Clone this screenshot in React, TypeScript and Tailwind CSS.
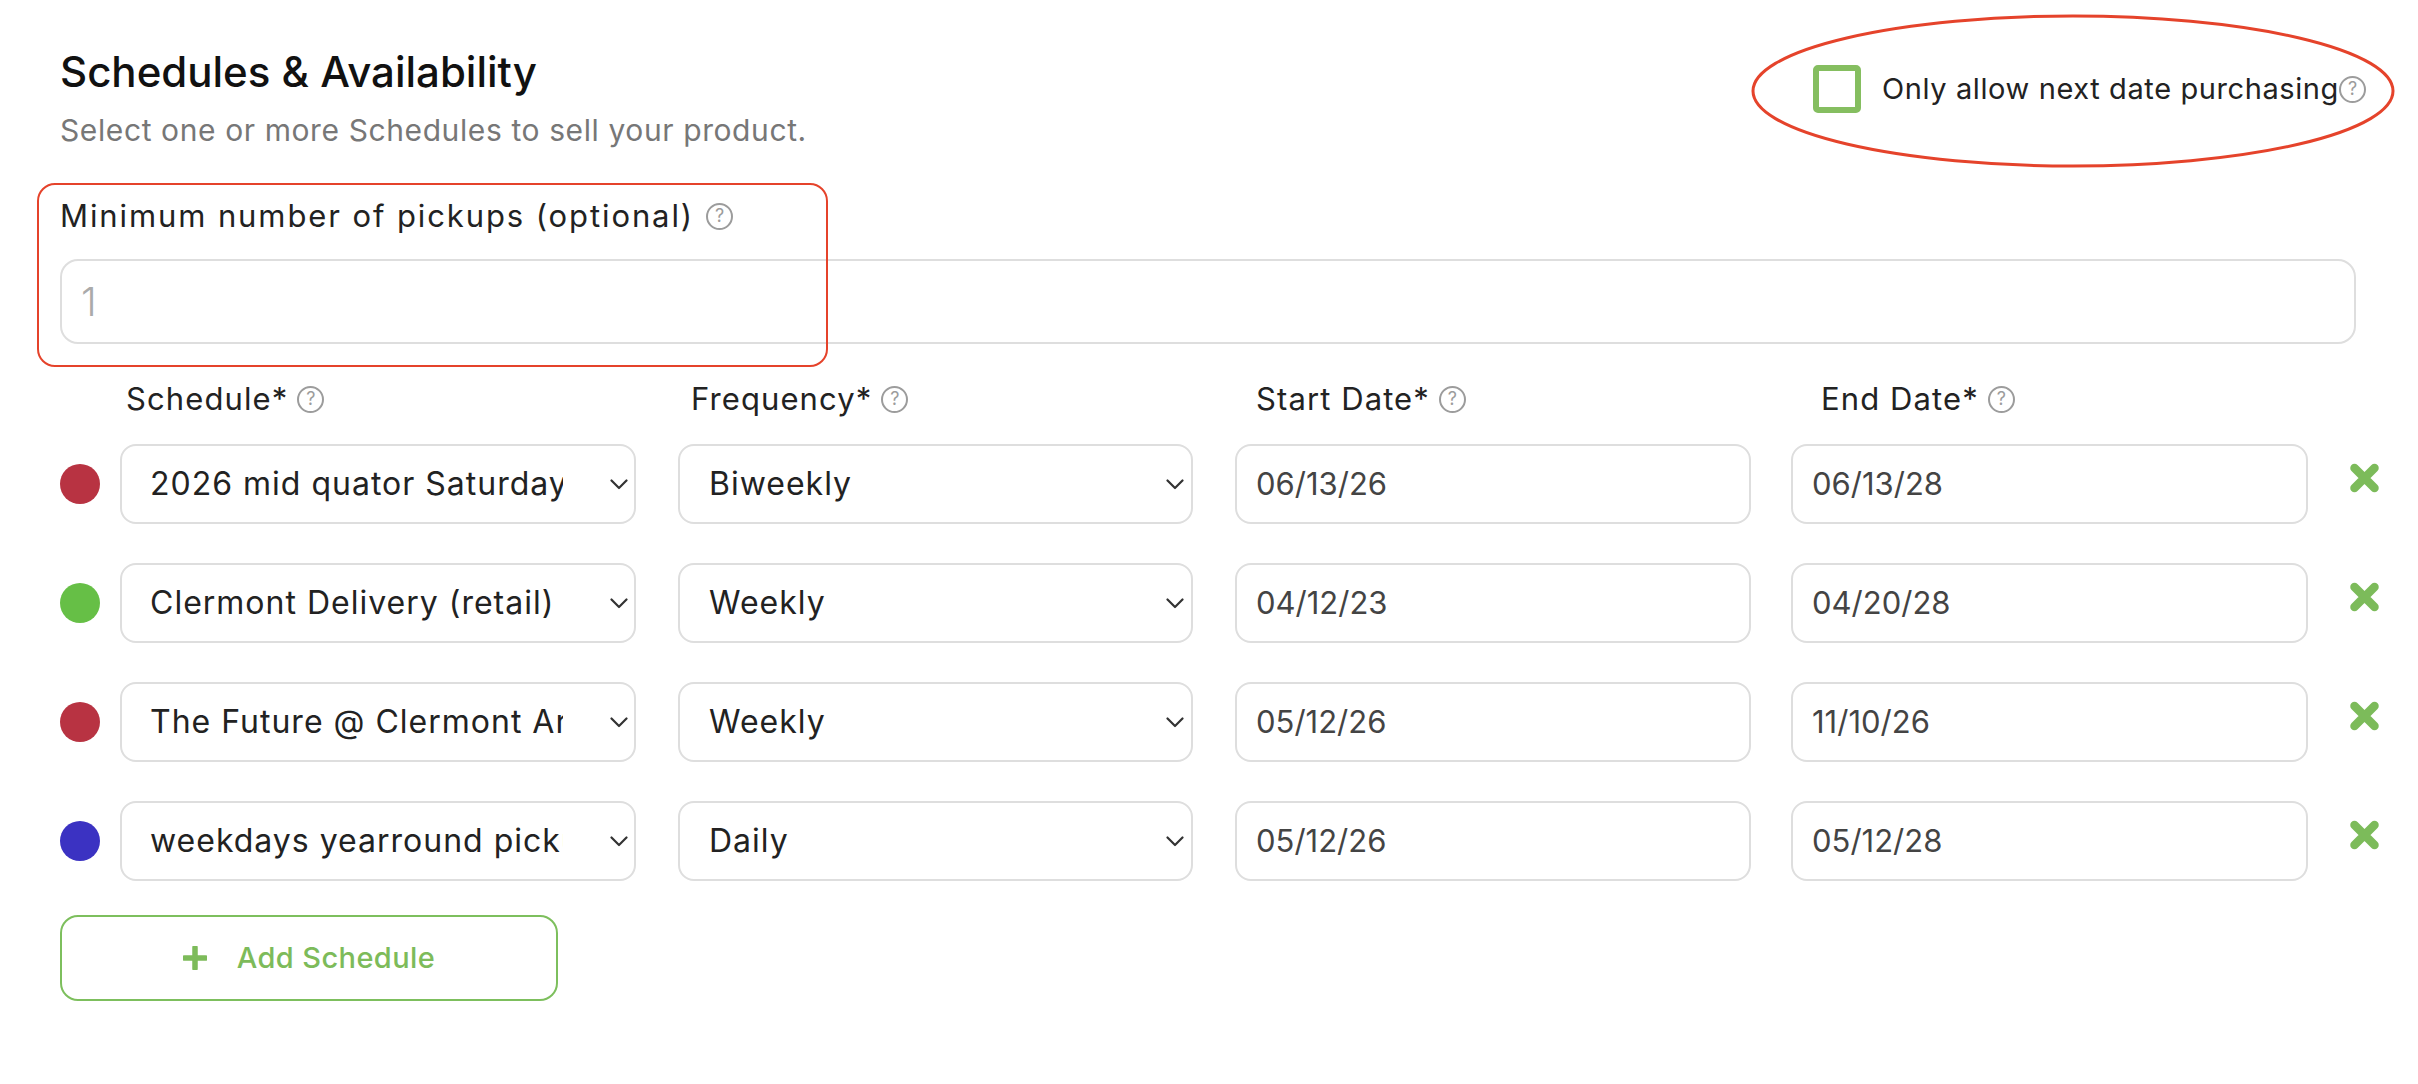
import React from "react";

const Help = ({ className = "" }: { className?: string }) => (
  <span
    className={`inline-flex items-center justify-center w-[27px] h-[27px] rounded-full border-[2.5px] border-[#9c9c9c] text-[#9c9c9c] text-[18px] leading-none font-normal shrink-0 ${className}`}
  >
    ?
  </span>
);

const Chevron = () => (
  <svg width="18" height="11" viewBox="0 0 18 11" className="shrink-0">
    <path d="M1.5 1.5 L9 9 L16.5 1.5" fill="none" stroke="#333" strokeWidth="2.2" strokeLinecap="round" strokeLinejoin="round" />
  </svg>
);

const XIcon = () => (
  <svg width="31" height="30" viewBox="0 0 31 30" className="shrink-0">
    <path d="M5.5 5 L25.5 25 M25.5 5 L5.5 25" stroke="#7cbb5a" strokeWidth="8.5" strokeLinecap="round" />
  </svg>
);

type Row = { color: string; schedule: string; freq: string; start: string; end: string };

const rows: Row[] = [
  { color: "bg-[#b83342]", schedule: "2026 mid quator Saturday", freq: "Biweekly", start: "06/13/26", end: "06/13/28" },
  { color: "bg-[#66bf46]", schedule: "Clermont Delivery (retail) (", freq: "Weekly", start: "04/12/23", end: "04/20/28" },
  { color: "bg-[#b83342]", schedule: "The Future @ Clermont Arts", freq: "Weekly", start: "05/12/26", end: "11/10/26" },
  { color: "bg-[#3b32c2]", schedule: "weekdays yearround pickups", freq: "Daily", start: "05/12/26", end: "05/12/28" },
];

export default function App() {
  return (
    <div className="w-[2418px] h-[1084px] bg-white relative overflow-hidden font-['Inter',sans-serif] text-[#222]">
      <div className="pl-[60px] pr-[62px] pt-[44px]">
        {/* Header */}
        <div className="flex justify-between items-start">
          <div>
            <h1 className="text-[42px] leading-[56px] font-medium text-[#111]">Schedules &amp; Availability</h1>
            <p className="mt-[10px] text-[30px] leading-[40px] tracking-[0.6px] text-[#777]">
              Select one or more Schedules to sell your product.
            </p>
          </div>
          <div className="flex items-center mt-[21px] mr-[-10px]">
            <span className="w-[48px] h-[48px] rounded-[5px] border-[6px] border-[#85be60] shrink-0" />
            <span className="ml-[21px] text-[29px] leading-[40px] tracking-[0.6px] text-[#222]">
              Only allow next date purchasing
            </span>
            <Help />
          </div>
        </div>

        {/* Minimum pickups */}
        <div className="mt-[46px]">
          <div className="flex items-center gap-[12px] h-[40px]">
            <span className="text-[31px] leading-[40px] tracking-[1.9px] text-[#222]">
              Minimum number of pickups (optional)
            </span>
            <Help />
          </div>
          <div className="mt-[23px] h-[85px] rounded-[18px] border-2 border-[#dedede] flex items-center pl-[19px]">
            <span className="text-[40px] font-light text-[#aaa]">1</span>
          </div>
        </div>

        {/* Column headers */}
        <div className="flex mt-[35px] pl-[66px] h-[40px] items-center">
          {["Schedule*", "Frequency*", "Start Date*", "End Date*"].map((l) => (
            <div key={l} className="w-[565px] shrink-0 flex items-center gap-[9px]">
              <span className="text-[31px] leading-[40px] tracking-[1.1px] text-[#222]">{l}</span>
              <Help />
            </div>
          ))}
        </div>

        {/* Rows */}
        <div className="mt-[25px] flex flex-col gap-[39px]">
          {rows.map((r, i) => (
            <div key={i} className="flex items-center h-[80px]">
              <span className={`w-[40px] h-[40px] rounded-full ${r.color} shrink-0`} />
              <div className="ml-[20px] w-[516px] shrink-0 h-[80px] rounded-[16px] border-2 border-[#dedede] flex items-center pl-[28px] pr-[6px]">
                <span className="w-[413px] overflow-hidden whitespace-nowrap text-[32px] tracking-[1px] text-[#222]">
                  {r.schedule}
                </span>
                <span className="ml-auto"><Chevron /></span>
              </div>
              <div className="ml-[42px] w-[515px] shrink-0 h-[80px] rounded-[16px] border-2 border-[#dedede] flex items-center pl-[29px] pr-[7px]">
                <span className="text-[32px] tracking-[1px] text-[#222]">{r.freq}</span>
                <span className="ml-auto"><Chevron /></span>
              </div>
              <div className="ml-[42px] w-[516px] shrink-0 h-[80px] rounded-[16px] border-2 border-[#dedede] flex items-center pl-[19px]">
                <span className="text-[31px] text-[#444]">{r.start}</span>
              </div>
              <div className="ml-[40px] w-[517px] shrink-0 h-[80px] rounded-[16px] border-2 border-[#dedede] flex items-center pl-[19px]">
                <span className="text-[31px] text-[#444]">{r.end}</span>
              </div>
              <span className="ml-[41px] mb-[12px] shrink-0"><XIcon /></span>
            </div>
          ))}
        </div>

        {/* Add schedule */}
        <div className="mt-[34px] w-[498px] h-[86px] rounded-[18px] border-2 border-[#7dbf5d] flex items-center justify-center gap-[30px]">
          <svg width="24" height="24" viewBox="0 0 24 24">
            <path d="M12 1.5 V22.5 M1.5 12 H22.5" stroke="#7dbb5a" strokeWidth="5.5" strokeLinecap="round" />
          </svg>
          <span className="text-[29px] font-medium tracking-[0.4px] text-[#7dbb5a]">Add Schedule</span>
        </div>
      </div>

      {/* Red annotation marks drawn over the form */}
      <div className="absolute left-[37px] top-[183px] w-[791px] h-[184px] rounded-[18px] border-[2.5px] border-[#e5432b] pointer-events-none" />
      <svg
        className="absolute left-[1750px] top-[13px] pointer-events-none"
        width="646"
        height="156"
        viewBox="0 0 646 156"
      >
        <ellipse cx="323" cy="78" rx="320" ry="75" fill="none" stroke="#e5432b" strokeWidth="3" />
      </svg>
    </div>
  );
}
